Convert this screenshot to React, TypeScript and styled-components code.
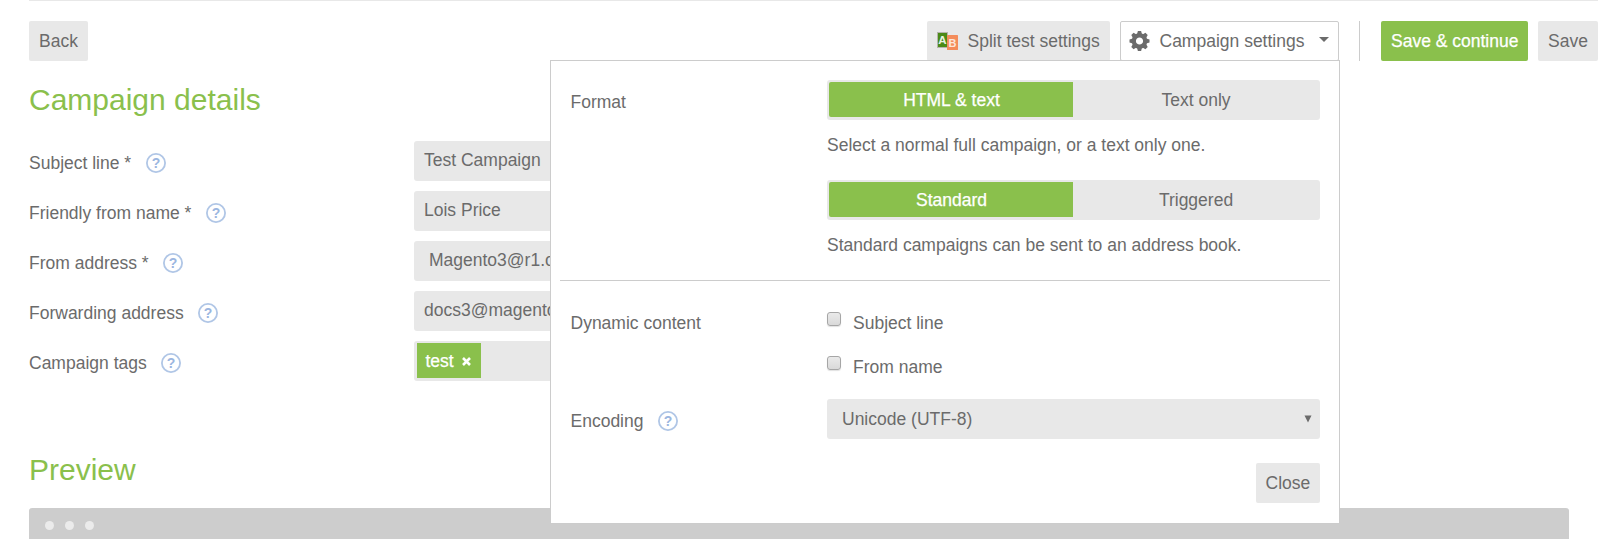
import React from "react";
import styled, { createGlobalStyle } from "styled-components";

const GREEN = "#8ac04c";
const GREY = "#e8e8e8";
const LINE = "#cccccc";
const TEXT = "#6b6b6b";

const GlobalStyle = createGlobalStyle`
  * { box-sizing: border-box; }
  html, body { margin: 0; padding: 0; background: #fff; height: 539px; overflow: hidden; }
  body, button, input { font-family: "Liberation Sans", Arial, sans-serif; font-size: 17.5px; color: ${TEXT}; }
`;

const Page = styled.div`
  width: 1624px;
  height: 539px;
  padding: 0 26px 0 29px;
  overflow: hidden;
  position: relative;
`;

const Toolbar = styled.header`
  display: flex;
  height: 61px;
  padding-top: 20px;
  border-top: 1px solid ${GREY};
`;

const Spacer = styled.div`
  flex: 1;
`;

const Button = styled.button<{ $primary?: boolean; $width?: number }>`
  display: flex;
  align-items: center;
  flex: none;
  height: 40px;
  padding: 0 10px;
  width: ${(p) => (p.$width ? `${p.$width}px` : "auto")};
  border: 0;
  border-radius: 2px;
  line-height: 40px;
  white-space: nowrap;
  background: ${(p) => (p.$primary ? GREEN : GREY)};
  color: ${(p) => (p.$primary ? "#fff" : TEXT)};
  -webkit-text-stroke: ${(p) => (p.$primary ? "0.25px #fff" : "0")};
`;

const SplitButton = styled(Button)`
  gap: 9.5px;
  margin-right: 10px;
`;

const MenuButton = styled(Button)`
  padding: 0 9px 0 8px;
  background: #fff;
  border: 1px solid ${LINE};

  span { margin-left: 9.5px; }
`;

const Caret = styled.i`
  margin: -3px 0 0 auto;
  border: 5px solid transparent;
  border-top-color: ${TEXT};
  border-bottom: 0;
`;

const Divider = styled.div`
  width: 1px;
  height: 40px;
  margin: 0 21px 0 20px;
  background: ${LINE};
`;

const SaveGap = styled.div`
  width: 10px;
`;

const Heading = styled.h1<{ $height: number; $top: number }>`
  margin: 0;
  height: ${(p) => p.$height}px;
  padding-top: ${(p) => p.$top}px;
  font-size: 30px;
  font-weight: 400;
  line-height: 33px;
  color: ${GREEN};
`;

const Form = styled.div`
  display: flex;
  flex-direction: column;
  gap: 10px;
`;

const FormRow = styled.div`
  display: grid;
  grid-template-columns: 385px 600px;
  height: 40px;
`;

const Label = styled.label`
  display: flex;
  align-items: center;
  gap: 14.7px;
  height: 44px;
  line-height: 44px;
  white-space: nowrap;
`;

const Field = styled.div<{ $indent?: number }>`
  height: 40px;
  padding-left: ${(p) => p.$indent ?? 10}px;
  border-radius: 3px;
  background: ${GREY};
  line-height: 38px;
  white-space: nowrap;
`;

const Tag = styled.span`
  display: inline-flex;
  align-items: center;
  justify-content: space-between;
  width: 64px;
  height: 35px;
  margin-top: 2px;
  padding: 1px 10px 0 8.5px;
  background: ${GREEN};
  color: #fff;
  line-height: 36px;
  vertical-align: top;
  -webkit-text-stroke: 0.25px #fff;
`;

const PreviewBar = styled.div`
  display: flex;
  gap: 11px;
  width: 1540px;
  height: 60px;
  padding: 13px 0 0 15.5px;
  border-radius: 3px 3px 0 0;
  background: #cdcdcd;
`;

const Dot = styled.i`
  width: 9px;
  height: 9px;
  border-radius: 50%;
  background: #ebebeb;
`;

const Panel = styled.section`
  position: absolute;
  left: 550px;
  top: 60px;
  width: 790px;
  height: 464px;
  padding: 19px 9px 0;
  border: 1px solid ${LINE};
  background: #fff;
`;

const PanelSection = styled.div<{ $height: number }>`
  display: grid;
  grid-template-columns: 256.5px 493px;
  height: ${(p) => p.$height}px;
  padding-left: 10.5px;
`;

const Rule = styled.hr`
  height: 1px;
  margin: 0;
  border: 0;
  background: ${LINE};
`;

const Toggle = styled.div`
  display: flex;
  height: 40px;
  padding: 2px 2px 3px;
  border-radius: 3px;
  background: ${GREY};
`;

const Choice = styled.div<{ $on?: boolean }>`
  width: ${(p) => (p.$on ? 244 : 245)}px;
  padding-left: 1px;
  line-height: 36px;
  height: 35px;
  text-align: center;
  border-radius: ${(p) => (p.$on ? "2px 0 0 2px" : "0")};
  background: ${(p) => (p.$on ? GREEN : "transparent")};
  color: ${(p) => (p.$on ? "#fff" : TEXT)};
  -webkit-text-stroke: ${(p) => (p.$on ? "0.25px #fff" : "0")};
`;

const Hint = styled.p`
  margin: 0;
  height: 60px;
  padding-top: 15px;
  line-height: 20px;
`;

const CheckRow = styled.label`
  display: flex;
  gap: 12px;
  height: 44px;
  line-height: 20px;
`;

const CheckBox = styled.input.attrs({ type: "checkbox" })`
  appearance: none;
  width: 14px;
  height: 14px;
  margin: -1px 0 0;
  border: 1px solid #a6a6a6;
  border-radius: 3px;
  background: linear-gradient(#eaeaea, #d9d9d9);
  box-shadow: 0 1px 1px rgba(0, 0, 0, 0.12);
`;

const Options = styled.div`
  padding-top: 32px;
`;

const OptionsLabel = styled.div`
  padding-top: 32px;
  line-height: 20px;
`;

const Select = styled.div`
  display: flex;
  align-items: center;
  justify-content: space-between;
  height: 40px;
  padding: 0 8.5px 0 15px;
  border-radius: 3px;
  background: ${GREY};
  line-height: 40px;
`;

const Footer = styled.div`
  display: flex;
  justify-content: flex-end;
  padding: 24px 10px 0 0;
`;

const CloseButton = styled(Button)`
  padding-left: 9.5px;
`;

const HelpIcon = () => (
  <svg width="20" height="20" viewBox="0 0 20 20">
    <circle cx="10" cy="10" r="9.1" fill="#fff" stroke="#b0c6e6" strokeWidth="1.8" />
    <text x="10" y="15" textAnchor="middle" fontSize="14" fontWeight="700" fill="#9bb6e0">?</text>
  </svg>
);

const SplitIcon = () => (
  <svg width="21" height="20" viewBox="0 0 21 20">
    <rect x="0.5" y="1.5" width="10" height="15" fill="#4b8a17" stroke="#b4b4ac" />
    <rect x="10" y="4" width="11" height="15" rx="0.5" fill="#f48c5b" />
    <text x="5.5" y="13" textAnchor="middle" fontSize="11.5" fontWeight="700" fill="#eaf2e2">A</text>
    <text x="15.5" y="15.5" textAnchor="middle" fontSize="11" fontWeight="700" fill="#fde6da">B</text>
  </svg>
);

const GearIcon = () => (
  <svg width="21" height="20" viewBox="-10.5 -10 21 20">
    <circle r="5.7" fill="none" stroke={TEXT} strokeWidth="4.2" />
    {[0, 45, 90, 135, 180, 225, 270, 315].map((a) => (
      <path key={a} d="M-2.5 -6.8L-1.6 -10H1.6L2.5 -6.8Z" fill={TEXT} transform={`rotate(${a})`} />
    ))}
  </svg>
);

const fields = [
  { label: "Subject line *", value: "Test Campaign" },
  { label: "Friendly from name *", value: "Lois Price" },
  { label: "From address *", value: "Magento3@r1.com", indent: 15 },
  { label: "Forwarding address", value: "docs3@magento.com" },
];

const formats = [
  { on: "HTML & text", off: "Text only", hint: "Select a normal full campaign, or a text only one." },
  { on: "Standard", off: "Triggered", hint: "Standard campaigns can be sent to an address book." },
];

export default function App() {
  return (
    <>
      <GlobalStyle />
      <Page>
        <Toolbar>
          <Button $width={59}>Back</Button>
          <Spacer />
          <SplitButton $width={183}>
            <SplitIcon />
            Split test settings
          </SplitButton>
          <MenuButton $width={219}>
            <GearIcon />
            <span>Campaign settings</span>
            <Caret />
          </MenuButton>
          <Divider />
          <Button $primary $width={147}>Save &amp; continue</Button>
          <SaveGap />
          <Button $width={60}>Save</Button>
        </Toolbar>

        <Heading $height={80} $top={22}>Campaign details</Heading>
        <Form>
          {fields.map((f) => (
            <FormRow key={f.label}>
              <Label>
                {f.label}
                <HelpIcon />
              </Label>
              <Field $indent={f.indent}>{f.value}</Field>
            </FormRow>
          ))}
          <FormRow>
            <Label>
              Campaign tags
              <HelpIcon />
            </Label>
            <Field $indent={3}>
              <Tag>
                test
                <svg width="9" height="9" viewBox="0 0 9 9">
                  <path d="M1 1L8 8M8 1L1 8" stroke="#fff" strokeWidth="2.6" />
                </svg>
              </Tag>
            </Field>
          </FormRow>
        </Form>
        <Heading $height={127} $top={72}>Preview</Heading>
        <PreviewBar>
          <Dot />
          <Dot />
          <Dot />
        </PreviewBar>

        <Panel>
          <PanelSection $height={200}>
            <Label>Format</Label>
            <div>
              {formats.map((f) => (
                <React.Fragment key={f.on}>
                  <Toggle>
                    <Choice $on>{f.on}</Choice>
                    <Choice>{f.off}</Choice>
                  </Toggle>
                  <Hint>{f.hint}</Hint>
                </React.Fragment>
              ))}
            </div>
          </PanelSection>
          <Rule />
          <PanelSection $height={118}>
            <OptionsLabel>Dynamic content</OptionsLabel>
            <Options>
              <CheckRow>
                <CheckBox />
                Subject line
              </CheckRow>
              <CheckRow>
                <CheckBox />
                From name
              </CheckRow>
            </Options>
          </PanelSection>
          <PanelSection $height={40}>
            <Label>
              Encoding
              <HelpIcon />
            </Label>
            <Select>
              Unicode (UTF-8)
              <svg width="8" height="8" viewBox="0 0 8 8">
                <path d="M0.5 0.5H7.5L4 7.5Z" fill={TEXT} />
              </svg>
            </Select>
          </PanelSection>
          <Footer>
            <CloseButton $width={64}>Close</CloseButton>
          </Footer>
        </Panel>
      </Page>
    </>
  );
}
